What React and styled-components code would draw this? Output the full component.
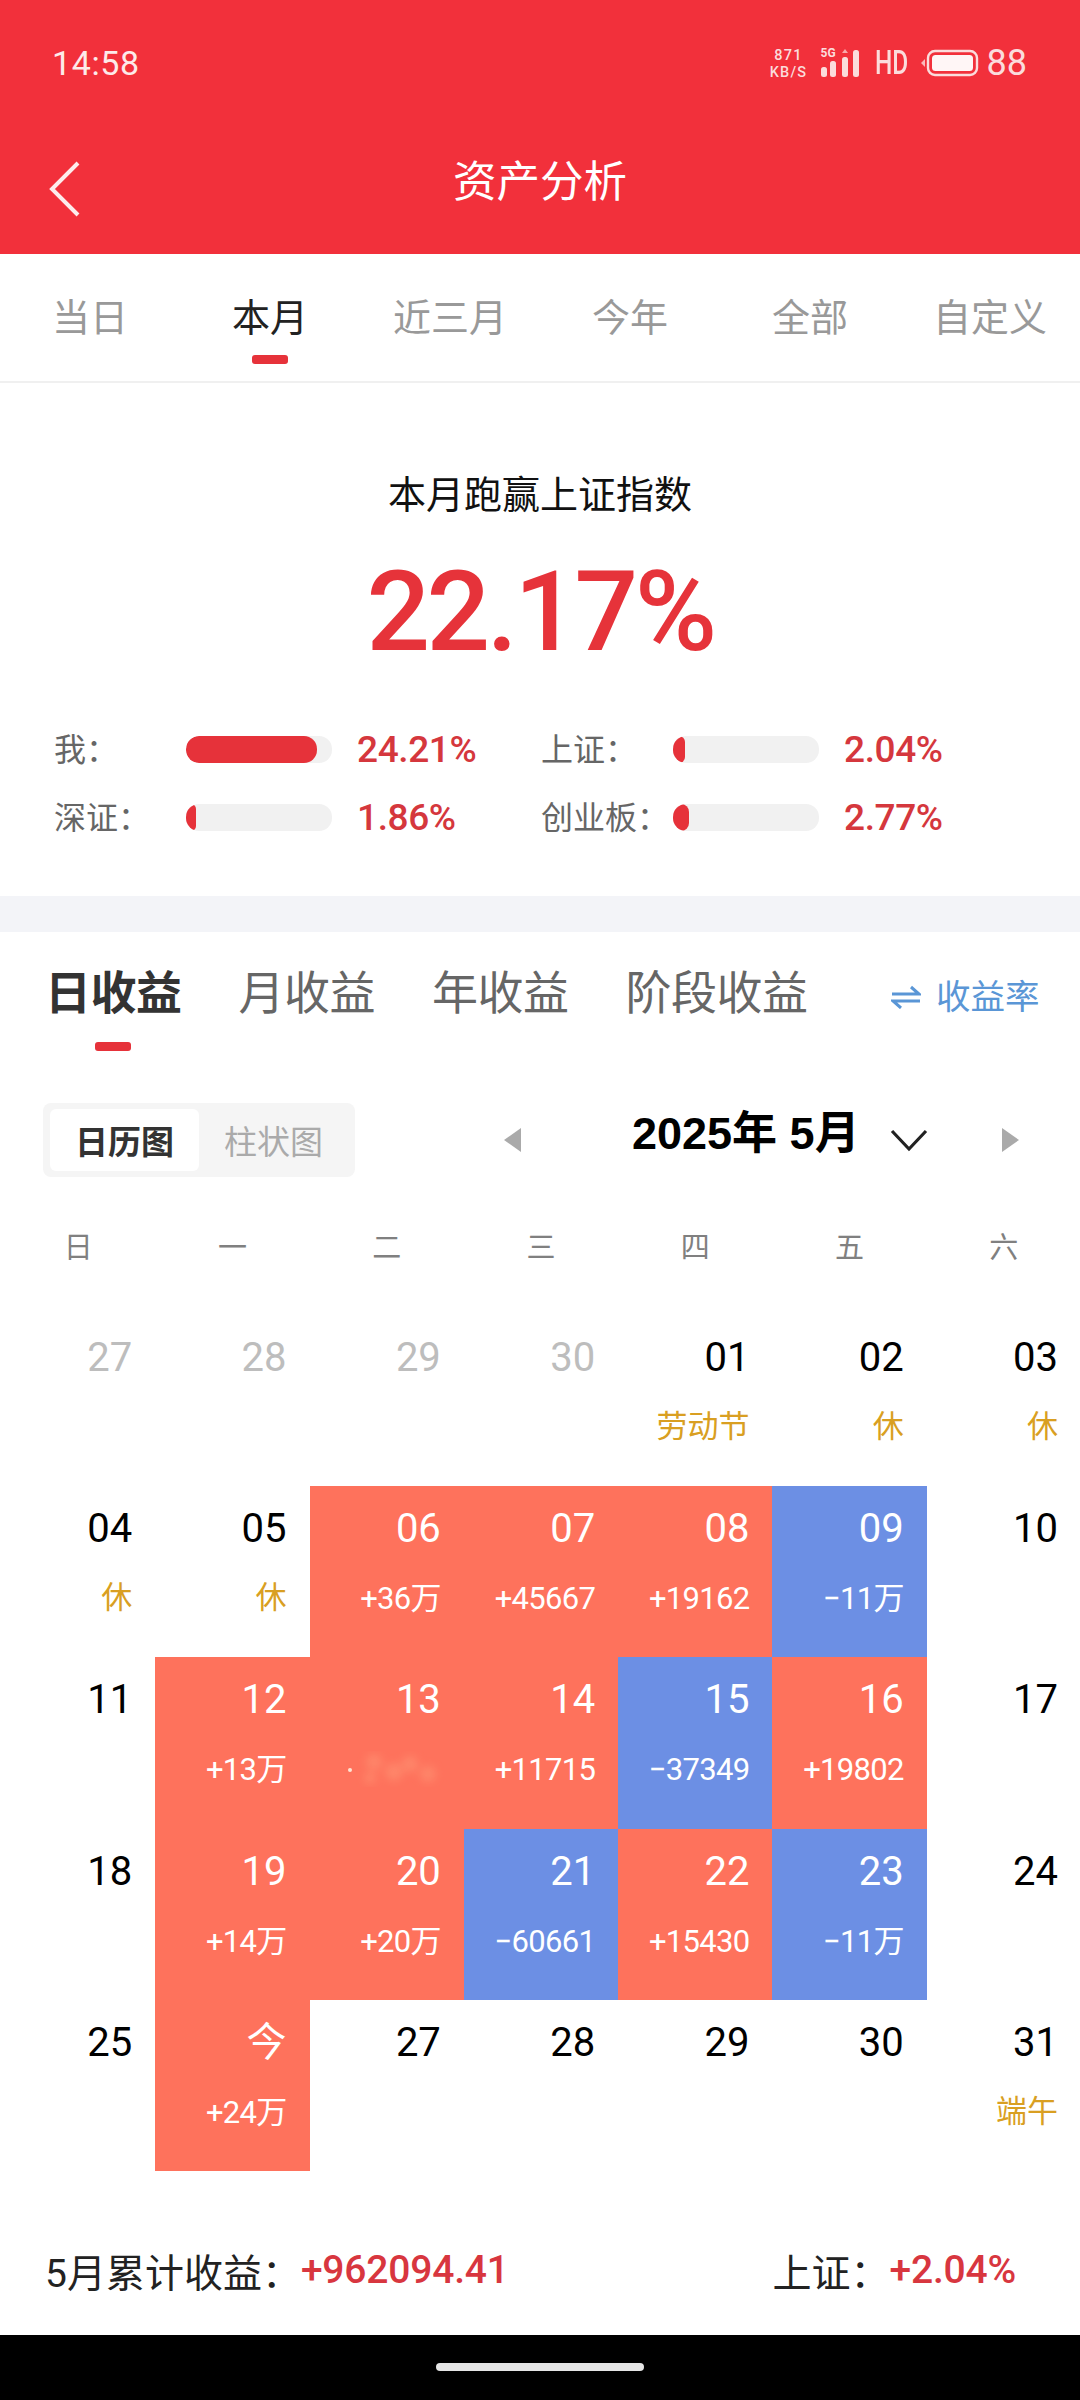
import React from "react";
import styled, { createGlobalStyle } from "styled-components";

const CJK = `Roboto, "Noto Sans CJK SC", sans-serif`;

const Global = createGlobalStyle`
  html, body { margin: 0; padding: 0; background: #fff; }
  body { width: 1080px; height: 2400px; overflow: hidden; font-family: ${CJK}; }
  * { box-sizing: border-box; }
`;

const Page = styled.div`
  width: 1080px;
  height: 2400px;
  display: flex;
  flex-direction: column;
  overflow: hidden;
`;

const Header = styled.header`
  height: 254px;
  background: #f2303b;
  color: #fff;
  display: flex;
  flex-direction: column;
`;

const StatusBar = styled.div`
  height: 126px;
  display: flex;
  align-items: center;
  justify-content: space-between;
  padding: 0 52px;
`;

const Clock = styled.span`
  font-size: 34px;
  letter-spacing: 0.6px;
  color: #fdeaea;
`;

const StatusIcons = styled.div`
  display: flex;
  align-items: center;
  color: #fbdcdc;
  margin-right: 1px;
`;

const Speed = styled.div`
  display: flex;
  flex-direction: column;
  align-items: center;
  width: 42px;
  font-size: 14.5px;
  line-height: 17px;
  letter-spacing: 1.2px;
  font-weight: 500;
  margin-top: 2px;
`;

const SignalWrap = styled.div`
  position: relative;
  width: 38px;
  height: 28px;
  margin-left: 11px;
`;

const FiveG = styled.span`
  position: absolute;
  left: 0;
  top: -2px;
  font-size: 12px;
  line-height: 12px;
  font-weight: 700;
`;

const Hd = styled.span`
  display: inline-block;
  width: 30px;
  margin-left: 16px;
  font-size: 33px;
  line-height: 34px;
  font-weight: 500;
  transform: scaleX(0.74);
  transform-origin: left center;
  white-space: nowrap;
`;

const Percent = styled.span`
  margin-left: 8px;
  font-size: 36px;
  line-height: 36px;
`;

const NavBar = styled.div`
  position: relative;
  height: 112px;
  display: flex;
  align-items: center;
  justify-content: center;
`;

const BackIcon = styled.svg`
  position: absolute;
  left: 48px;
  top: 35px;
`;

const NavTitle = styled.h1`
  margin: 0;
  padding-top: 2px;
  font-size: 43.5px;
  font-weight: 400;
  line-height: 60px;
`;

const PeriodTabs = styled.nav`
  height: 129px;
  display: grid;
  grid-template-columns: repeat(6, 1fr);
  border-bottom: 2px solid #f0f0f0;
`;

const PeriodTab = styled.div`
  display: flex;
  flex-direction: column;
  align-items: center;
  padding-top: 38px;
  font-size: 38px;
  line-height: 52px;
  color: ${(p) => (p.$active ? "#222" : "#999")};
`;

const Indicator = styled.span`
  width: 36px;
  height: 9px;
  border-radius: 3px;
  background: #e6323a;
  flex: none;
  margin-top: ${(p) => p.$gap}px;
`;

const Summary = styled.section`
  height: 513px;
  padding-top: 86px;
  display: flex;
  flex-direction: column;
  align-items: center;
`;

const SummaryTitle = styled.div`
  font-size: 38px;
  line-height: 52px;
  color: #111;
`;

const BigNumber = styled.div`
  margin-top: 21px;
  font-size: 112px;
  line-height: 140px;
  font-weight: 500;
  letter-spacing: -3.5px;
  color: #e6333a;
`;

const Compare = styled.div`
  align-self: stretch;
  margin-top: 34px;
  padding-left: 54px;
  display: grid;
  grid-template-columns: 487px 1fr;
  grid-auto-rows: 68px;
`;

const CompareItem = styled.div`
  display: flex;
  align-items: center;
  height: 68px;
`;

const CompareLabel = styled.span`
  width: 132px;
  font-size: 32px;
  margin-top: -5px;
  color: #666;
`;

const Track = styled.div`
  width: 146px;
  height: 27px;
  border-radius: 13px;
  background: #f1f1f1;
  overflow: hidden;
`;

const Fill = styled.div`
  height: 100%;
  border-radius: 13px;
  background: #e6323a;
`;

const CompareValue = styled.span`
  margin-left: 25px;
  font-size: 37px;
  font-weight: 500;
  letter-spacing: -0.4px;
  color: #d5373d;
`;

const Band = styled.div`
  height: 36px;
  background: #f3f4f8;
`;

const EarningTabs = styled.div`
  height: 120px;
  position: relative;
  display: flex;
  padding: 31px 0 0 45px;
`;

const EarningTab = styled.div`
  margin-right: 57px;
  display: flex;
  flex-direction: column;
  align-items: center;
  font-size: 46px;
  line-height: 60px;
  font-weight: ${(p) => (p.$active ? 700 : 400)};
  letter-spacing: -0.5px;
  color: ${(p) => (p.$active ? "#333" : "#666")};
`;

const Rate = styled.div`
  position: absolute;
  left: 891px;
  top: 41px;
  display: flex;
  align-items: center;
  gap: 15px;
  font-size: 34.5px;
  line-height: 48px;
  color: #5a96d6;
`;

const Toolbar = styled.div`
  margin-top: 51px;
  height: 74px;
  display: flex;
  align-items: flex-start;
  padding-left: 43px;
`;

const Segment = styled.div`
  width: 312px;
  height: 74px;
  padding: 6px 7px;
  display: flex;
  background: #f5f5f5;
  border-radius: 8px;
  flex: none;
`;

const SegmentItem = styled.div`
  width: 149px;
  display: flex;
  align-items: center;
  justify-content: center;
  font-size: 33px;
  font-weight: ${(p) => (p.$active ? 700 : 400)};
  color: ${(p) => (p.$active ? "#333" : "#aaa")};
  background: ${(p) => (p.$active ? "#fff" : "transparent")};
  border-radius: 6px;
`;

const MonthPicker = styled.div`
  display: flex;
  align-items: center;
  height: 74px;
  margin-left: 149px;
`;

const MonthTitle = styled.div`
  margin-left: 111px;
  width: 258px;
  font-size: 45px;
  line-height: 60px;
  font-weight: 700;
  color: #000;
  font-family: "Liberation Sans", "Noto Sans CJK SC", sans-serif;
  margin-top: -12px;
  white-space: nowrap;
`;

const RightTri = styled.svg`
  margin-left: 74px;
`;

const WeekRow = styled.div`
  margin-top: 47px;
  height: 48px;
  padding-left: 1px;
  width: 1081px;
  display: grid;
  grid-template-columns: repeat(7, 1fr);
`;

const WeekDay = styled.div`
  text-align: center;
  font-size: 29px;
  line-height: 48px;
  color: #808080;
`;

const Calendar = styled.div`
  margin-top: 43px;
  width: 1081px;
  padding-left: 1px;
  display: grid;
  grid-template-columns: repeat(7, 1fr);
  grid-auto-rows: 171.25px;
`;

const tones = { up: "#fe725c", down: "#6c8fe4" };

const Cell = styled.div`
  display: flex;
  flex-direction: column;
  align-items: flex-end;
  padding: 19px 23px 0 0;
  background: ${(p) => tones[p.$tone] || "transparent"};
  color: ${(p) => (tones[p.$tone] ? "#fff" : "#000")};
`;

const DayNumber = styled.div`
  font-size: 40px;
  line-height: 48px;
  height: 48px;
  color: ${(p) => (p.$muted ? "#bdbdbd" : "inherit")};
`;

const Amount = styled.div`
  margin-top: 26px;
  height: 40px;
  font-size: 31px;
  line-height: 40px;
  letter-spacing: -0.7px;
  white-space: nowrap;
  color: #fff;
`;

const Holiday = styled.div`
  margin-top: 25px;
  height: 40px;
  font-size: 31px;
  line-height: 40px;
  white-space: nowrap;
  color: #d99f22;
`;

const Masked = styled.svg`
  margin-top: 26px;
  margin-right: -3px;
`;

const Footer = styled.footer`
  height: 164px;
  padding: 34px 64px 0 45px;
  display: flex;
  align-items: center;
  justify-content: space-between;
`;

const FooterGroup = styled.div`
  display: flex;
  align-items: center;
  font-size: 39px;
  color: #222;
  white-space: nowrap;
`;

const FooterValue = styled.span`
  font-weight: 500;
  letter-spacing: -0.2px;
  color: #d8363f;
`;

const SystemBar = styled.div`
  height: 65px;
  background: #000;
  display: flex;
  align-items: center;
  justify-content: center;
`;

const HomePill = styled.div`
  width: 208px;
  height: 8px;
  border-radius: 4px;
  background: #e6e6e6;
`;

const periods = ["当日", "本月", "近三月", "今年", "全部", "自定义"];
const earnings = ["日收益", "月收益", "年收益", "阶段收益"];
const week = ["日", "一", "二", "三", "四", "五", "六"];

const compares = [
  { label: "我：", value: "24.21%", fill: 131 },
  { label: "上证：", value: "2.04%", fill: 12 },
  { label: "深证：", value: "1.86%", fill: 10 },
  { label: "创业板：", value: "2.77%", fill: 16 },
];

const days = [
  { d: "27", muted: true }, { d: "28", muted: true }, { d: "29", muted: true }, { d: "30", muted: true },
  { d: "01", h: "劳动节" }, { d: "02", h: "休" }, { d: "03", h: "休" },
  { d: "04", h: "休" }, { d: "05", h: "休" },
  { d: "06", a: "+36万", t: "up" }, { d: "07", a: "+45667", t: "up" }, { d: "08", a: "+19162", t: "up" },
  { d: "09", a: "−11万", t: "down" }, { d: "10" },
  { d: "11" }, { d: "12", a: "+13万", t: "up" }, { d: "13", masked: true, t: "up" },
  { d: "14", a: "+11715", t: "up" }, { d: "15", a: "−37349", t: "down" }, { d: "16", a: "+19802", t: "up" }, { d: "17" },
  { d: "18" }, { d: "19", a: "+14万", t: "up" }, { d: "20", a: "+20万", t: "up" },
  { d: "21", a: "−60661", t: "down" }, { d: "22", a: "+15430", t: "up" }, { d: "23", a: "−11万", t: "down" }, { d: "24" },
  { d: "25" }, { d: "今", a: "+24万", t: "up" }, { d: "27" }, { d: "28" }, { d: "29" }, { d: "30" }, { d: "31", h: "端午" },
];

function Signal() {
  return (
    <SignalWrap>
      <FiveG>5G</FiveG>
      <svg width="38" height="28" viewBox="0 0 38 28" fill="currentColor">
        <rect x="0" y="18" width="6" height="10" rx="2.5" />
        <rect x="9" y="12" width="6" height="16" rx="2.5" />
        <rect x="21" y="8" width="6" height="20" rx="2.5" />
        <path d="M24 0l3 4h-6z" opacity=".7" />
        <rect x="32" y="1" width="6" height="27" rx="2.5" />
      </svg>
    </SignalWrap>
  );
}

function Battery() {
  return (
    <svg width="58" height="28" viewBox="0 0 58 28" style={{ marginLeft: 16 }}>
      <path d="M0 14l4-4v8z" fill="#fbdcdc" opacity=".8" />
      <rect x="7" y="2" width="49" height="24" rx="7" fill="none" stroke="#fbdcdc" strokeWidth="2.4" />
      <rect x="11" y="6" width="41" height="16" rx="3.5" fill="#fff6f6" />
    </svg>
  );
}

function Triangle({ dir, ...rest }) {
  const d = dir === "left" ? "M17 0v24L0 12z" : "M0 0v24l17-12z";
  return (
    <svg width="17" height="24" viewBox="0 0 17 24" {...rest}>
      <path d={d} fill="#aaa" />
    </svg>
  );
}

export default function App() {
  return (
    <Page>
      <Global />
      <Header>
        <StatusBar>
          <Clock>14:58</Clock>
          <StatusIcons>
            <Speed>
              <span>871</span>
              <span>KB/S</span>
            </Speed>
            <Signal />
            <Hd>HD</Hd>
            <Battery />
            <Percent>88</Percent>
          </StatusIcons>
        </StatusBar>
        <NavBar>
          <BackIcon width="34" height="56" viewBox="0 0 34 56" fill="none">
            <path d="M30 2L4 28l26 26" stroke="#fdecec" strokeWidth="4" />
          </BackIcon>
          <NavTitle>资产分析</NavTitle>
        </NavBar>
      </Header>

      <PeriodTabs>
        {periods.map((p, i) => (
          <PeriodTab key={p} $active={i === 1}>
            {p}
            {i === 1 && <Indicator $gap={11} />}
          </PeriodTab>
        ))}
      </PeriodTabs>

      <Summary>
        <SummaryTitle>本月跑赢上证指数</SummaryTitle>
        <BigNumber>22.17%</BigNumber>
        <Compare>
          {compares.map((c) => (
            <CompareItem key={c.label}>
              <CompareLabel>{c.label}</CompareLabel>
              <Track>
                <Fill style={{ width: c.fill }} />
              </Track>
              <CompareValue>{c.value}</CompareValue>
            </CompareItem>
          ))}
        </Compare>
      </Summary>

      <Band />

      <EarningTabs>
        {earnings.map((e, i) => (
          <EarningTab key={e} $active={i === 0}>
            {e}
            {i === 0 && <Indicator $gap={19} />}
          </EarningTab>
        ))}
        <Rate>
          <svg width="30" height="24" viewBox="0 0 30 24" fill="none" stroke="#5a96d6" strokeWidth="3">
            <path d="M1 9h27L20 2" />
            <path d="M29 16H2l8 7" />
          </svg>
          收益率
        </Rate>
      </EarningTabs>

      <Toolbar>
        <Segment>
          <SegmentItem $active>日历图</SegmentItem>
          <SegmentItem>柱状图</SegmentItem>
        </Segment>
        <MonthPicker>
          <Triangle dir="left" />
          <MonthTitle>2025年 5月</MonthTitle>
          <svg width="38" height="24" viewBox="0 0 38 24" fill="none">
            <path d="M2 3l17 18L36 3" stroke="#222" strokeWidth="3.2" />
          </svg>
          <RightTri as={Triangle} dir="right" />
        </MonthPicker>
      </Toolbar>

      <WeekRow>
        {week.map((w) => (
          <WeekDay key={w}>{w}</WeekDay>
        ))}
      </WeekRow>

      <Calendar>
        {days.map((c, i) => (
          <Cell key={i} $tone={c.t}>
            <DayNumber $muted={c.muted}>{c.d}</DayNumber>
            {c.a && <Amount>{c.a}</Amount>}
            {c.h && <Holiday>{c.h}</Holiday>}
            {c.masked && (
              <Masked width="100" height="40" viewBox="0 0 100 40">
                <defs>
                  <filter id="mosaic"><feGaussianBlur stdDeviation="4" /></filter>
                </defs>
                <g filter="url(#mosaic)" fill="#ff9a78" opacity=".5">
                  <circle cx="30" cy="12" r="8" />
                  <circle cx="50" cy="22" r="9" />
                  <circle cx="66" cy="14" r="8" />
                  <circle cx="84" cy="24" r="8" />
                  <circle cx="26" cy="28" r="6" />
                </g>
                <circle cx="6" cy="20" r="2" fill="#ffe4d2" />
              </Masked>
            )}
          </Cell>
        ))}
      </Calendar>

      <Footer>
        <FooterGroup>
          5月累计收益：<FooterValue>+962094.41</FooterValue>
        </FooterGroup>
        <FooterGroup>
          上证：<FooterValue>+2.04%</FooterValue>
        </FooterGroup>
      </Footer>

      <SystemBar>
        <HomePill />
      </SystemBar>
    </Page>
  );
}
